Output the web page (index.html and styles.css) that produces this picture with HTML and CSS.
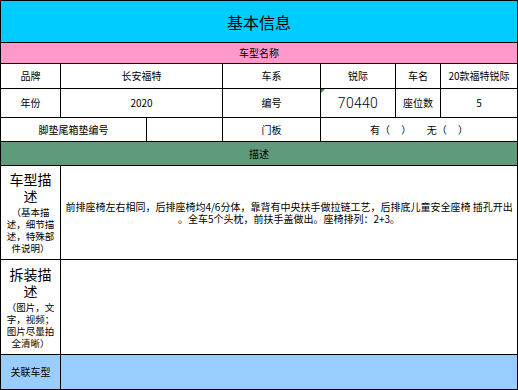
FILE: index.html
```html
<!DOCTYPE html>
<html lang="zh">
<head>
<meta charset="utf-8">
<title>基本信息</title>
<link rel="stylesheet" href="styles.css">
</head>
<body>
<table class="sheet">
  <colgroup>
    <col class="w60"><col class="w86"><col class="w76"><col class="w98"><col class="w75"><col class="w45"><col class="w77">
  </colgroup>
  <tr class="h-title"><td colspan="7" class="title">基本信息</td></tr>
  <tr class="h-sub"><td colspan="7" class="band pink">车型名称</td></tr>
  <tr class="h-r1">
    <td>品牌</td><td colspan="2">长安福特</td><td>车系</td><td>锐际</td><td>车名</td><td>20款福特锐际</td>
  </tr>
  <tr class="h-r2">
    <td>年份</td><td colspan="2">2020</td><td>编号</td><td class="num"><span class="flag"></span>70440</td><td>座位数</td><td>5</td>
  </tr>
  <tr class="h-r3">
    <td colspan="2">脚垫尾箱垫编号</td><td></td><td>门板</td><td colspan="3" class="pre">有（     ）       无（     ）</td>
  </tr>
  <tr class="h-sub2"><td colspan="7" class="band green">描述</td></tr>
  <tr class="h-desc1">
    <td class="label"><span class="big">车型描<br>述</span><span class="small">（基本描<br>述，细节描<br>述，特殊部<br>件说明）</span></td>
    <td colspan="6" class="desc"><span class="line">前排座椅左右相同，后排座椅均4/6分体，靠背有中央扶手做拉链工艺，后排底儿童安全座椅 插孔开出</span><span class="line">。全车5个头枕，前扶手盖做出。座椅排列：2+3。</span></td>
  </tr>
  <tr class="h-desc2">
    <td class="label"><span class="big">拆装描<br>述</span><span class="small">（图片，文<br>字，视频；<br>图片尽量拍<br>全清晰）</span></td>
    <td colspan="6"></td>
  </tr>
  <tr class="h-rel">
    <td class="blue">关联车型</td><td colspan="6" class="blue"></td>
  </tr>
</table>
</body>
</html>
```
FILE: styles.css
```css
html, body {
  margin: 0;
  padding: 0;
  background: #ffffff;
}
.sheet {
  width: 518px;
  table-layout: fixed;
  border-collapse: collapse;
  font-family: "Noto Sans CJK SC", "Liberation Sans", sans-serif;
  font-size: 10px;
  color: #000;
}
.w60 { width: 60px; }
.w86 { width: 86px; }
.w76 { width: 76px; }
.w98 { width: 98px; }
.w75 { width: 75px; }
.w45 { width: 45px; }
.w77 { width: 77px; }
.sheet td {
  border: 1px solid #000;
  padding: 0;
  text-align: center;
  vertical-align: middle;
  line-height: 12px;
  overflow: hidden;
}
.h-title { height: 42px; }
.h-sub { height: 21px; }
.h-r1 { height: 25px; }
.h-r2 { height: 29px; }
.h-r3 { height: 24px; }
.h-sub2 { height: 24px; }
.h-desc1 { height: 94px; }
.h-desc2 { height: 95px; }
.h-rel { height: 35px; }
.title {
  background: #00ccff;
  font-size: 16px;
  line-height: 20px;
}
.band { font-size: 10px; }
.pink { background: #ff99cc; }
.green { background: #5f9b7a; }
.blue { background: #99ccff; }
.num {
  position: relative;
  font-family: "Roboto", "Liberation Sans", sans-serif;
  font-weight: 300;
  font-size: 14px;
  letter-spacing: 0.3px;
}
.flag {
  position: absolute;
  left: 0;
  top: 0;
  width: 0;
  height: 0;
  border-top: 4px solid #3c8c3c;
  border-right: 4px solid transparent;
}
.pre { white-space: pre; }
.label { padding: 0 1px; }
.big {
  display: block;
  font-size: 14px;
  line-height: 17px;
}
.small {
  display: block;
  font-size: 9.5px;
  line-height: 12px;
  margin-top: 1px;
}
.desc { padding: 0 1px; }
.line {
  display: block;
  white-space: nowrap;
}
```
